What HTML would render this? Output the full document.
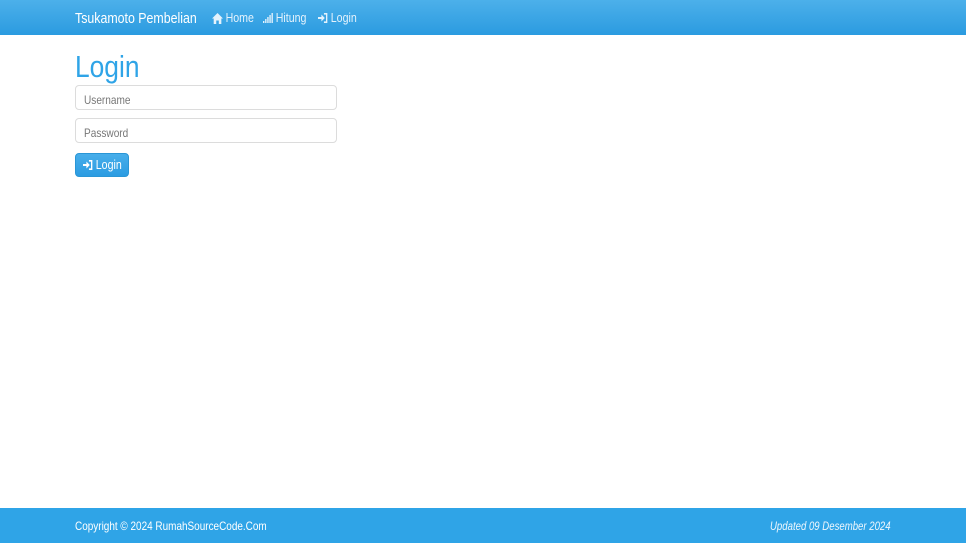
<!DOCTYPE html>
<html><head><meta charset="utf-8"><style>
*{box-sizing:border-box;margin:0;padding:0}
body{width:966px;height:543px;background:#fff;font-family:"Liberation Sans",sans-serif;position:relative;overflow:hidden}
.s{display:inline-block;transform-origin:left center;white-space:nowrap}
.nav{height:35px;background:linear-gradient(#4cb0ea,#2b9be0);color:#fff;position:relative}
.brand{position:absolute;left:75px;top:10px;font-size:15px;transform:scaleX(0.825)}
.nav .lk{position:absolute;top:11px;font-size:12.5px;color:#e4f2fc;display:flex;align-items:center;gap:3px;white-space:nowrap;transform:scaleX(0.85);transform-origin:left center}
h1{position:absolute;left:75px;top:49px;font-size:31px;font-weight:normal;color:#2fa4e7;transform:scaleX(0.85);transform-origin:left}
.inp{position:absolute;left:75px;width:262px;height:25px;border:1px solid #dcdcdc;border-radius:4px;color:#777;padding:5px 0 0 8px}
.inp .s{font-size:12px;transform:scaleX(0.84)}
.btn{position:absolute;left:75px;top:153px;width:54px;height:24px;border-radius:4px;background:linear-gradient(#48aeea,#2b9ce2);color:#fff;font-size:12.5px;border:1px solid #2a96d6}
.btn .s{position:absolute;left:7px;top:4px;transform:scaleX(0.85);display:flex;align-items:center;gap:3px}
.foot{position:absolute;left:0;top:508px;width:966px;height:35px;background:#2fa4e7;color:#fff}
.foot .l{position:absolute;left:75px;top:11px;font-size:12px;transform:scaleX(0.83)}
.foot .r{position:absolute;left:770px;top:11px;font-size:12px;font-style:italic;color:#eef7fd;transform:scaleX(0.8)}
</style></head><body>
<div class="nav"><div class="brand s">Tsukamoto Pembelian</div>
<span class="lk" style="left:212px"><svg width="13" height="11" viewBox="0 0 13 11"><path d="M6.5 0L0 5.5h2V11h3V7.5h3V11h3V5.5h2z" fill="#e4f2fc"/></svg>Home</span>
<span class="lk" style="left:263px"><svg width="12" height="10" viewBox="0 0 12 10"><rect x="0" y="8" width="1.6" height="2" fill="#e4f2fc"/><rect x="2.5" y="6" width="1.6" height="4" fill="#e4f2fc"/><rect x="5" y="4" width="1.6" height="6" fill="#e4f2fc"/><rect x="7.5" y="2" width="1.6" height="8" fill="#e4f2fc"/><rect x="10" y="0" width="1.6" height="10" fill="#e4f2fc"/></svg>Hitung</span>
<span class="lk" style="left:318px"><svg width="12" height="10" viewBox="0 0 12 10"><path d="M0 4h4V1.5L8 5 4 8.5V6H0z" fill="#e4f2fc"/><path d="M7 0.8h3.2v8.4H7" stroke="#e4f2fc" stroke-width="1.6" fill="none"/></svg>Login</span>
</div>
<h1>Login</h1>
<div class="inp" style="top:85px"><span class="s">Username</span></div>
<div class="inp" style="top:118px"><span class="s">Password</span></div>
<div class="btn"><span class="s"><svg width="12" height="10" viewBox="0 0 12 10"><path d="M0 4h4V1.5L8 5 4 8.5V6H0z" fill="#fff"/><path d="M7 0.8h3.2v8.4H7" stroke="#fff" stroke-width="1.6" fill="none"/></svg>Login</span></div>
<div class="foot"><div class="l s">Copyright © 2024 RumahSourceCode.Com</div><div class="r s">Updated 09 Desember 2024</div></div>
</body></html>
